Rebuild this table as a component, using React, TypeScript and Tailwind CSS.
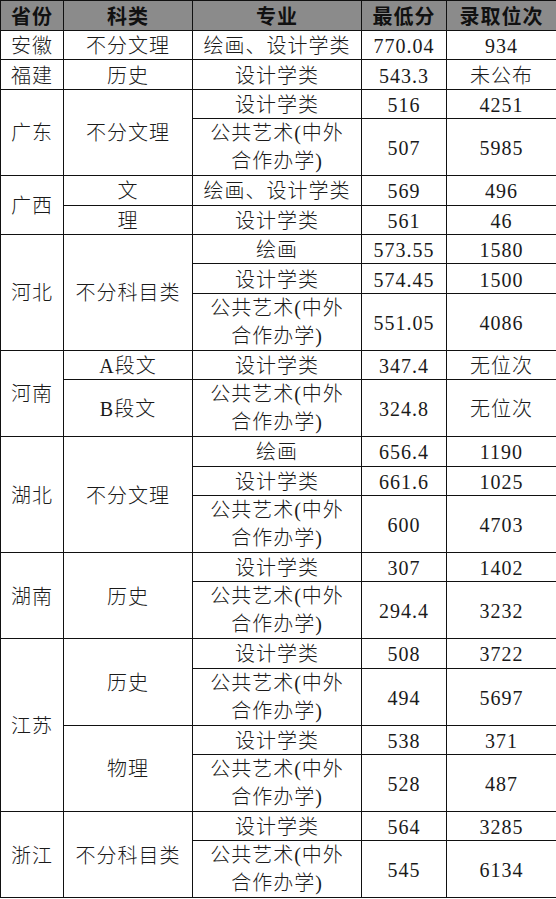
import React from 'react'

type Row = {
  prov?: string
  provSpan?: number
  kind?: string
  kindSpan?: number
  major: string
  score: string
  rank: string
}

const PUB = 'pub'

const rows: Row[] = [
  { prov: '安徽', kind: '不分文理', major: '绘画、设计学类', score: '770.04', rank: '934' },
  { prov: '福建', kind: '历史', major: '设计学类', score: '543.3', rank: '未公布' },
  { prov: '广东', provSpan: 2, kind: '不分文理', kindSpan: 2, major: '设计学类', score: '516', rank: '4251' },
  { major: PUB, score: '507', rank: '5985' },
  { prov: '广西', provSpan: 2, kind: '文', major: '绘画、设计学类', score: '569', rank: '496' },
  { kind: '理', major: '设计学类', score: '561', rank: '46' },
  { prov: '河北', provSpan: 3, kind: '不分科目类', kindSpan: 3, major: '绘画', score: '573.55', rank: '1580' },
  { major: '设计学类', score: '574.45', rank: '1500' },
  { major: PUB, score: '551.05', rank: '4086' },
  { prov: '河南', provSpan: 2, kind: 'A段文', major: '设计学类', score: '347.4', rank: '无位次' },
  { kind: 'B段文', major: PUB, score: '324.8', rank: '无位次' },
  { prov: '湖北', provSpan: 3, kind: '不分文理', kindSpan: 3, major: '绘画', score: '656.4', rank: '1190' },
  { major: '设计学类', score: '661.6', rank: '1025' },
  { major: PUB, score: '600', rank: '4703' },
  { prov: '湖南', provSpan: 2, kind: '历史', kindSpan: 2, major: '设计学类', score: '307', rank: '1402' },
  { major: PUB, score: '294.4', rank: '3232' },
  { prov: '江苏', provSpan: 4, kind: '历史', kindSpan: 2, major: '设计学类', score: '508', rank: '3722' },
  { major: PUB, score: '494', rank: '5697' },
  { kind: '物理', kindSpan: 2, major: '设计学类', score: '538', rank: '371' },
  { major: PUB, score: '528', rank: '487' },
  { prov: '浙江', provSpan: 2, kind: '不分科目类', kindSpan: 2, major: '设计学类', score: '564', rank: '3285' },
  { major: PUB, score: '545', rank: '6134' },
]

// single-line cells sit a little low, as in the scan
const td = 'border border-[#111] px-0 pb-0 pt-[2px] leading-[26px] text-center align-middle'
const tdPub = 'border border-[#111] p-0 leading-[28px] text-center align-middle'
const th = 'border border-[#111] p-0 text-center align-middle font-bold text-[#111]'

export default function App() {
  return (
    <div className="w-[556px] h-[899px] bg-white overflow-hidden">
      <table
        className="w-[556px] table-fixed border-collapse text-[20px] text-[#1a1a1a] tracking-[1px] font-light"
        style={{ fontFamily: '"Liberation Serif", "Noto Sans CJK SC", serif' }}
      >
        <colgroup>
          <col className="w-[63px]" />
          <col className="w-[129px]" />
          <col className="w-[169px]" />
          <col className="w-[85px]" />
          <col className="w-[110px]" />
        </colgroup>
        <thead>
          <tr className="h-[30px] bg-[#8b8b8b] leading-[28px]" style={{ fontFamily: '"Noto Sans CJK SC", sans-serif' }}>
            <th className={th}>省份</th>
            <th className={th}>科类</th>
            <th className={th}>专业</th>
            <th className={th}>最低分</th>
            <th className={th}>录取位次</th>
          </tr>
        </thead>
        <tbody>
          {rows.map((r, i) => (
            <tr key={i} className={r.major === PUB ? 'h-[57px]' : 'h-[29.4px]'}>
              {r.prov && (
                <td className={td} rowSpan={r.provSpan}>
                  {r.prov}
                </td>
              )}
              {r.kind && (
                <td className={td} rowSpan={r.kindSpan}>
                  {r.kind}
                </td>
              )}
              {r.major === PUB ? (
                <td className={tdPub}>
                  公共艺术(中外
                  <br />
                  合作办学)
                </td>
              ) : (
                <td className={td}>{r.major}</td>
              )}
              <td className={td}>{r.score}</td>
              <td className={td}>{r.rank}</td>
            </tr>
          ))}
        </tbody>
      </table>
    </div>
  )
}
